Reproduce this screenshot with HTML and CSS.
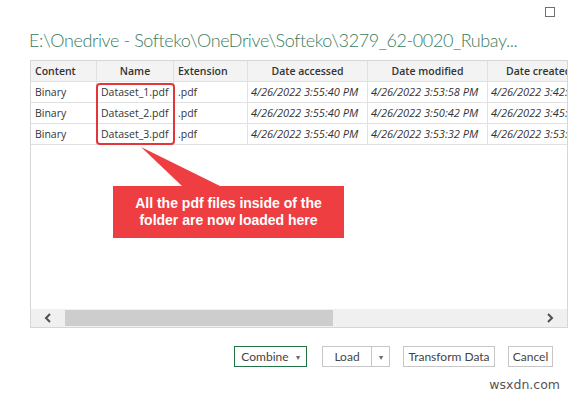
FILE: index.html
```html
<!DOCTYPE html>
<html lang="en">
<head>
    <meta charset="UTF-8">
    <meta name="viewport" content="width=device-width, initial-scale=1.0">
    <title>Navigator</title>
    <link rel="stylesheet" href="styles.css">
</head>
<body>
    <section class="dialog">
        <div class="window-bar">
            <span class="max-icon"></span>
        </div>

        <h2 class="title">E:\Onedrive - Softeko\OneDrive\Softeko\3279_62-0020_Rubay...</h2>

        <div class="grid-box">
            <div class="grid">
                <div class="row head">
                    <div class="cell c-content">Content</div>
                    <div class="cell c-name center">Name</div>
                    <div class="cell c-ext">Extension</div>
                    <div class="cell c-date center">Date accessed</div>
                    <div class="cell c-date center">Date modified</div>
                    <div class="cell c-date c-last">Date created</div>
                </div>
                <div class="row">
                    <div class="cell c-content">Binary</div>
                    <div class="cell c-name">Dataset_1.pdf</div>
                    <div class="cell c-ext">.pdf</div>
                    <div class="cell c-date date">4/26/2022 3:55:40 PM</div>
                    <div class="cell c-date date">4/26/2022 3:53:58 PM</div>
                    <div class="cell c-date date">4/26/2022 3:42:10 PM</div>
                </div>
                <div class="row">
                    <div class="cell c-content">Binary</div>
                    <div class="cell c-name">Dataset_2.pdf</div>
                    <div class="cell c-ext">.pdf</div>
                    <div class="cell c-date date">4/26/2022 3:55:40 PM</div>
                    <div class="cell c-date date">4/26/2022 3:50:42 PM</div>
                    <div class="cell c-date date">4/26/2022 3:45:21 PM</div>
                </div>
                <div class="row">
                    <div class="cell c-content">Binary</div>
                    <div class="cell c-name">Dataset_3.pdf</div>
                    <div class="cell c-ext">.pdf</div>
                    <div class="cell c-date date">4/26/2022 3:55:40 PM</div>
                    <div class="cell c-date date">4/26/2022 3:53:32 PM</div>
                    <div class="cell c-date date">4/26/2022 3:53:05 PM</div>
                </div>
            </div>

            <div class="scrollbar">
                <span class="arrow">
                    <svg width="8" height="10" viewBox="0 0 8 10"><path d="M6 1 L2 5 L6 9" fill="none" stroke="#505050" stroke-width="2"/></svg>
                </span>
                <div class="track">
                    <div class="thumb"></div>
                </div>
                <span class="arrow">
                    <svg width="8" height="10" viewBox="0 0 8 10"><path d="M2 1 L6 5 L2 9" fill="none" stroke="#505050" stroke-width="2"/></svg>
                </span>
            </div>

            <!-- annotation over the table -->
            <div class="highlight"></div>
            <svg class="pointer" width="80" height="40" viewBox="0 0 80 40">
                <polygon points="0,0 41,39 79,39" fill="#ee3e42"/>
            </svg>
            <div class="callout">All the pdf files inside of the<br>folder are now loaded here</div>
        </div>

        <div class="buttons">
            <a href="#" class="btn btn-primary">Combine <span class="caret">&#9662;</span></a>
            <div class="split">
                <a href="#" class="btn-part load">Load</a>
                <a href="#" class="btn-part drop"><span class="caret">&#9662;</span></a>
            </div>
            <a href="#" class="btn btn-transform">Transform Data</a>
            <a href="#" class="btn btn-cancel">Cancel</a>
        </div>

        <div class="watermark">wsxdn.com</div>
    </section>
</body>
</html>
```

FILE: styles.css
```css
* {
    margin: 0;
    padding: 0;
    box-sizing: border-box;
    font-family: 'Open Sans', 'Noto Sans', sans-serif;
}

a {
    text-decoration: none;
    color: #444;
}

body {
    background-color: #fff;
    width: 572px;
    height: 398px;
    overflow: hidden;
}

.dialog {
    padding: 0 4px 0 30px;
}


/* window bar */

.window-bar {
    display: flex;
    justify-content: flex-end;
    padding: 7px 13px 0 0;
    height: 27px;
}

.max-icon {
    width: 10px;
    height: 10px;
    border: 1px solid #707070;
}

.title {
    font-family: 'Lato', sans-serif;
    font-size: 18px;
    font-weight: 300;
    letter-spacing: -0.4px;
    color: #3b7b5c;
    line-height: 26px;
    white-space: nowrap;
    margin-bottom: 7px;
    margin-left: -1px;
}


/* grid */

.grid-box {
    position: relative;
    width: 538px;
    height: 268px;
    border: 1px solid #d6d6d6;
    display: flex;
    flex-direction: column;
    justify-content: space-between;
    overflow: hidden;
}

.grid {
    width: 620px;
}

.row {
    display: flex;
    height: 21px;
    border-bottom: 1px solid #e1e1e1;
}

.head {
    background-color: #f3f3f3;
}

.head .cell {
    font-weight: 600;
}

.cell {
    font-size: 10.5px;
    color: #333;
    line-height: 20px;
    padding: 0 4px;
    border-right: 1px solid #e1e1e1;
    white-space: nowrap;
    overflow: hidden;
}

.c-content {
    width: 66px;
}

.c-name {
    width: 77px;
}

.c-ext {
    width: 74px;
}

.c-date {
    width: 120px;
}

.c-last {
    padding-left: 18px;
}

.center {
    text-align: center;
}

.date {
    font-style: italic;
    font-size: 11px;
    padding: 0 3px;
}


/* scrollbar */

.scrollbar {
    display: flex;
    align-items: center;
    height: 18px;
    background-color: #f0f0f0;
}

.arrow {
    display: flex;
    justify-content: center;
    align-items: center;
    width: 34px;
    height: 18px;
}

.track {
    flex: 1;
    height: 16px;
}

.thumb {
    width: 268px;
    height: 100%;
    background-color: #cdcdcd;
}


/* annotation */

.highlight {
    position: absolute;
    top: 22px;
    left: 65px;
    width: 79px;
    height: 62px;
    border: 2px solid #e2363a;
    border-radius: 4px;
}

.pointer {
    position: absolute;
    top: 86px;
    left: 110px;
}

.callout {
    position: absolute;
    top: 125px;
    left: 82px;
    width: 231px;
    height: 52px;
    background-color: #ee3e42;
    color: #fff;
    font-family: 'Liberation Sans', Arial, sans-serif;
    font-weight: bold;
    font-size: 14px;
    line-height: 17px;
    text-align: center;
    padding-top: 9px;
}


/* buttons */

.buttons {
    display: flex;
    justify-content: flex-end;
    gap: 13px;
    margin-top: 18px;
    padding-right: 15px;
}

.btn,
.btn-part {
    display: inline-block;
    height: 21px;
    line-height: 19px;
    font-family: 'Lato', sans-serif;
    font-size: 12px;
    color: #444;
    border: 1px solid #c6c6c6;
    background-color: #fff;
    text-align: center;
    white-space: nowrap;
}

.btn-primary {
    border-color: #217346;
    width: 73px;
    margin-right: 2px;
}

.btn-transform {
    width: 92px;
}

.btn-cancel {
    width: 45px;
}

.caret {
    font-size: 8px;
    color: #666;
    margin-left: 4px;
    vertical-align: 1px;
}

.split {
    display: flex;
}

.load {
    width: 50px;
}

.drop {
    width: 18px;
    border-left: none;
}

.drop .caret {
    margin-left: 0;
}

.watermark {
    text-align: right;
    padding-right: 8px;
    margin-top: 10px;
    font-family: 'DejaVu Sans', sans-serif;
    font-size: 12.5px;
    color: #555;
}
```
